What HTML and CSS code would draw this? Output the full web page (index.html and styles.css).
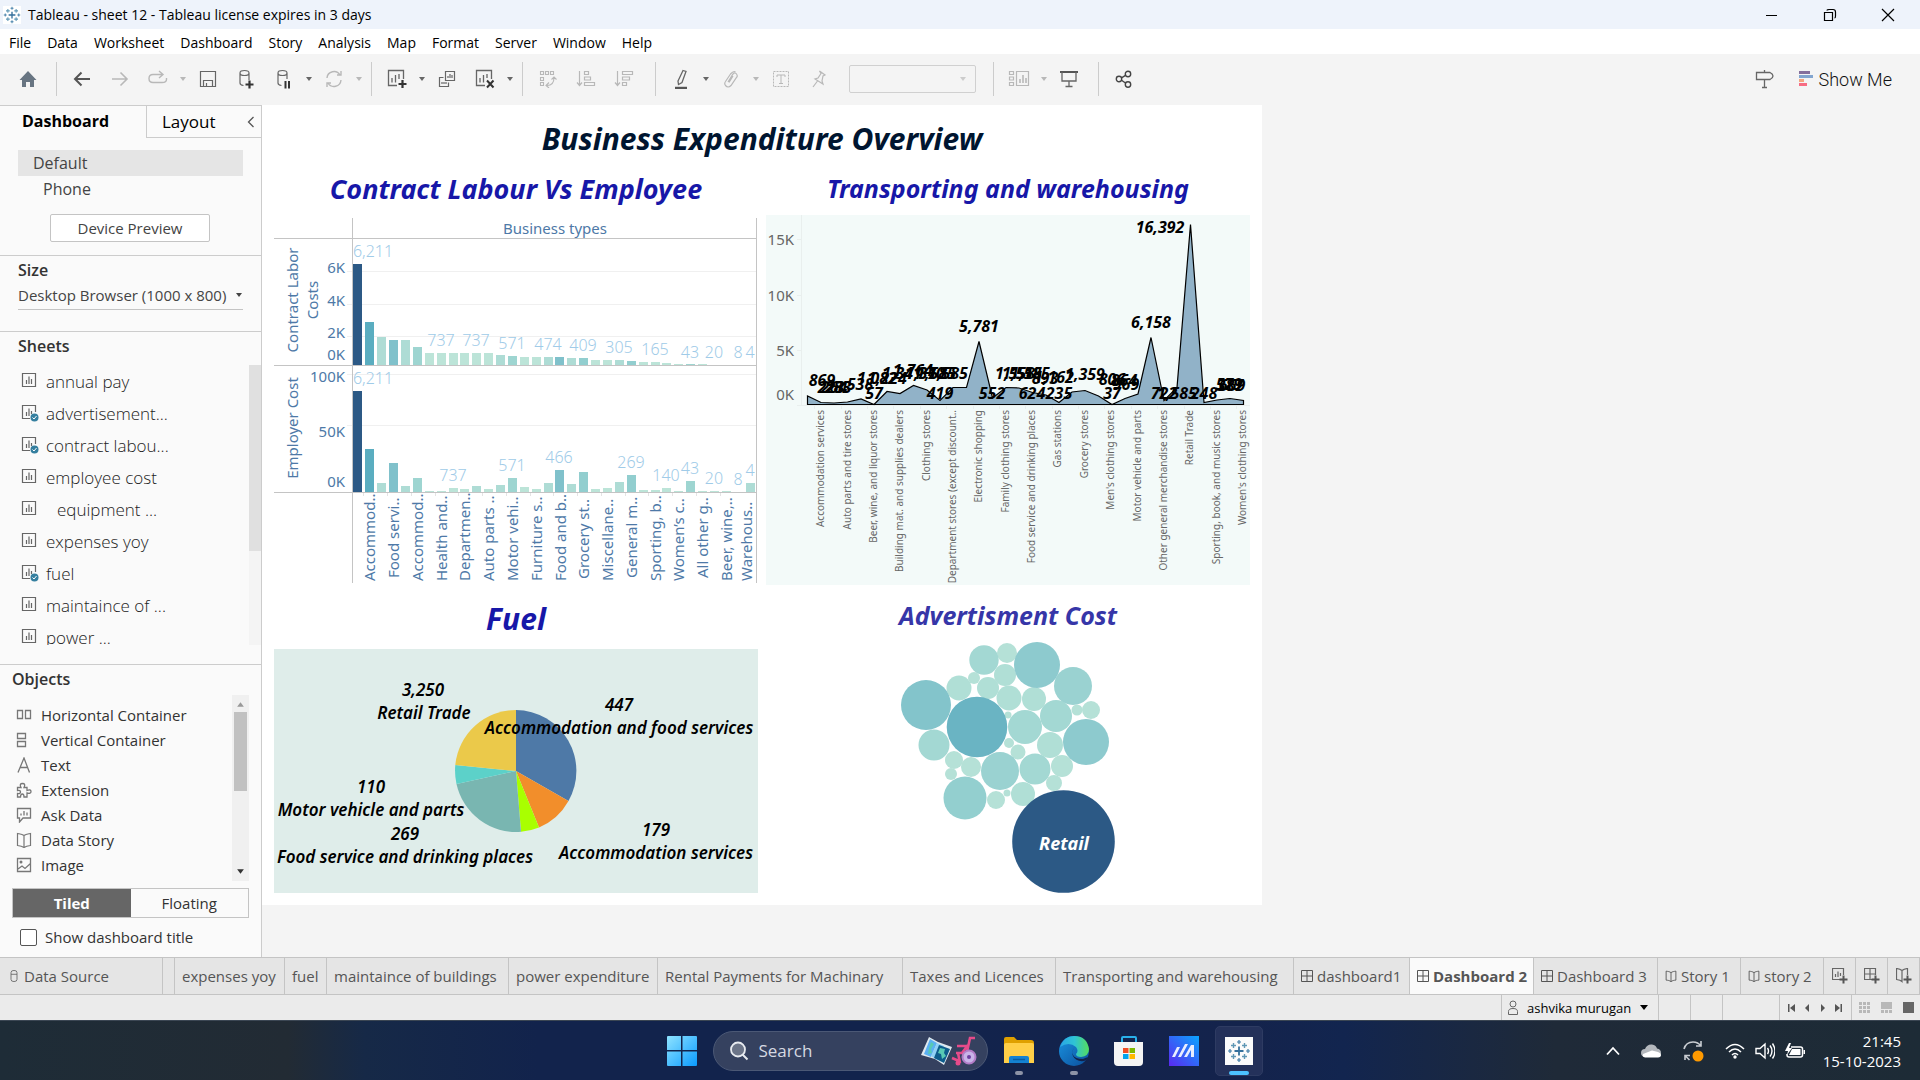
FILE: index.html
```html
<!DOCTYPE html>
<html lang="en">
<head>
<meta charset="utf-8">
<title>Tableau - sheet 12</title>
<link rel="stylesheet" href="styles.css">
</head>
<body>
<svg class="defs" aria-hidden="true">
  <symbol id="sheet" viewBox="0 0 16 16"><path d="M2 1.500h12.500v13H1.500v-13zM5.500 8v4M8 4.500V12M10.500 7v5" fill="none" stroke="currentColor" stroke-width="1.200"/></symbol>
  <symbol id="sheet-used" viewBox="0 0 18 18"><path d="M9 14.500H1.500v-13h13V8M5.500 8v4M8 4.500V12M10.500 7v3" fill="none" stroke="#666" stroke-width="1.200"/><circle cx="13.500" cy="13.500" r="4" fill="#357f9f"/><path d="M11.500 13.500l1.500 1.500 2.500-3" fill="none" stroke="#fff"/></symbol>
  <symbol id="caret" viewBox="0 0 8 6"><path d="M1 1h6L4 5z" fill="currentColor"/></symbol>
  <symbol id="grid" viewBox="0 0 12 12"><path d="M.5.5h11v11H.5zM6 .5v11M.5 6h11" fill="none" stroke="currentColor"/></symbol>
  <symbol id="book" viewBox="0 0 16 16"><path d="M8 3.500C6 2 4 2 1.500 1.500v12c2.500.2 4.500.5 6.500 2 2-1.500 4-1.800 6.500-2v-12C12 2 10 2 8 3.500zM8 3.500v12" fill="none" stroke="currentColor" stroke-width="1.200"/></symbol>
  <symbol id="logo" viewBox="0 0 24 24"><g fill="none" stroke="#35709c" stroke-width="1.800"><path d="M12 7.500v9M7.500 12h9"/><path stroke="#5f97b5" stroke-width="1.400" d="M6.500 4v5M4 6.500h5M17.500 4v5M15 6.500h5M6.500 15v5M4 17.500h5M17.500 15v5M15 17.500h5"/><path stroke="#3c7aa5" stroke-width="1.200" d="M12 1v4M10 3h4M12 19v4M10 21h4M3 10v4M1 12h4M21 10v4M19 12h4"/></g></symbol>
</svg>
<div class="app">
  <header class="titlebar">
    <svg class="app-icon"><use href="#logo"/></svg>
    <span class="app-title">Tableau - sheet 12 - Tableau license expires in 3 days</span>
    <button class="win" aria-label="Minimize"><svg width="14" height="14"><path d="M1 7.500h11" stroke="#000"/></svg></button>
    <button class="win" aria-label="Restore"><svg width="14" height="14"><path d="M1.500 4.500h8v8h-8zM4 2.500q0-1 2-1h4q2.500 0 2.500 2.500v4q0 2-1 2" fill="none" stroke="#000" stroke-width="1.200"/></svg></button>
    <button class="win" aria-label="Close"><svg width="14" height="14"><path d="M1 1l12 12M13 1L1 13" stroke="#000" stroke-width="1.200"/></svg></button>
  </header>
  <nav class="menubar">
    <button>File</button><button>Data</button><button>Worksheet</button><button>Dashboard</button><button>Story</button><button>Analysis</button><button>Map</button><button>Format</button><button>Server</button><button>Window</button><button>Help</button>
  </nav>
  <div class="toolbar">
    <div class="group home">
      <button class="tool" aria-label="Home"><svg width="18" height="18"><path d="M9 1l8.500 9H15v7h-4v-5H7v5H3v-7H.5z" fill="#687582"/></svg></button>
    </div>
    <div class="group">
      <button class="tool" aria-label="Back"><svg width="18" height="18"><path d="M17 9H2M8.500 2.500L2 9l6.500 6.500" fill="none" stroke="#555" stroke-width="2"/></svg></button>
      <button class="tool off" aria-label="Forward"><svg width="18" height="18"><path d="M1 9h15M9.500 2.500L16 9l-6.500 6.500" fill="none" stroke="currentColor" stroke-width="1.600"/></svg></button>
      <button class="tool off" aria-label="Redo"><svg width="20" height="18"><path d="M14 4.500H5q-4 0-4 4t4 4h9q4.500 0 4.500-3V8M11 1l4 3.500L11 8" fill="none" stroke="currentColor" stroke-width="1.400"/></svg></button>
      <button class="drop off" aria-label="Redo options"><svg><use href="#caret"/></svg></button>
      <button class="tool" aria-label="Save"><svg width="18" height="18"><path d="M1.500 1.500h15v15h-15zM4.500 16v-5.500h9V16M7.500 16v-3" fill="none" stroke="currentColor" stroke-width="1.200"/></svg></button>
      <button class="tool" aria-label="New data source"><svg width="18" height="20"><path d="M3 4q0-2.500 4.500-2.500T12 4v7M12 4q0 2.500-4.500 2.500T3 4v10q0 2 3.500 2.500" fill="none" stroke="currentColor" stroke-width="1.200"/><path d="M12.500 11.500v8M8.500 15.500h8" stroke="#333" stroke-width="2.200"/></svg></button>
      <button class="tool" aria-label="Pause updates"><svg width="18" height="20"><path d="M3 4q0-2.500 4.500-2.500T12 4v6M12 4q0 2.500-4.500 2.500T3 4v10q0 2 3.500 2.500" fill="none" stroke="currentColor" stroke-width="1.200"/><path d="M10.500 12v7.500M14 12v7.500" stroke="#333" stroke-width="2"/></svg></button>
      <button class="drop" aria-label="Pause options"><svg><use href="#caret"/></svg></button>
      <button class="tool off" aria-label="Refresh"><svg width="18" height="18"><path d="M2 8a7 7 0 0 1 13-3M16 10a7 7 0 0 1-13 3M12 5h4V1M6 13H2v4" fill="none" stroke="currentColor" stroke-width="1.400"/></svg></button>
      <button class="drop off" aria-label="Refresh options"><svg><use href="#caret"/></svg></button>
    </div>
    <div class="group">
      <button class="tool" aria-label="New worksheet"><svg width="20" height="20"><path d="M10 16.500H1.500v-15h15V10M5 9v4.500M8.500 6v7.500M12 5v5" fill="none" stroke="currentColor" stroke-width="1.300"/><path d="M15.500 11v8M11.500 15h8" stroke="#333" stroke-width="2.200"/></svg></button>
      <button class="drop" aria-label="Worksheet options"><svg><use href="#caret"/></svg></button>
      <button class="tool" aria-label="Duplicate"><svg width="18" height="18"><path d="M7.500 1.500h9v9h-9zM5.500 7.500h-4v9h9v-4M10 8V6M12 8V4M14 8V5M4 14v-2M6 14v-2M8 14v-2" fill="none" stroke="currentColor" stroke-width="1.200"/></svg></button>
      <button class="tool" aria-label="Clear sheet"><svg width="20" height="20"><path d="M10 16.500H1.500v-15h15V10M5 9v4.500M8.500 6v7.500M12 5v4" fill="none" stroke="currentColor" stroke-width="1.300"/><path d="M12 11.500l6.500 7M18.500 11.500l-6.500 7" stroke="#333" stroke-width="2"/></svg></button>
      <button class="drop" aria-label="Clear options"><svg><use href="#caret"/></svg></button>
    </div>
    <div class="group wide-end">
      <button class="tool off" aria-label="Swap rows and columns"><svg width="18" height="18"><path d="M1.500 1.500h3v3h-3zM6.500 1.500h3v3h-3zM11.500 1.500h3v3h-3zM1.500 7.500h3v3h-3zM1.500 12.500h3v3h-3zM8 15.500q7 0 7-8M12.500 9.500L15 7l2.500 2.500M10 12.500l-3 3 3 2.500" fill="none" stroke="currentColor" stroke-width="1.100"/></svg></button>
      <button class="tool off" aria-label="Sort ascending"><svg width="20" height="18"><path d="M3.500 1v14M1 12.500l2.500 3 2.500-3M8.500 1.500h4v3h-4zM8.500 7h6v3h-6zM8.500 12.500h10v3h-10z" fill="none" stroke="currentColor" stroke-width="1.200"/></svg></button>
      <button class="tool off" aria-label="Sort descending"><svg width="20" height="18"><path d="M3.500 1v14M1 12.500l2.500 3 2.500-3M8.500 1.500h10v3h-10zM8.500 7h7v3h-7zM8.500 12.500h4v3h-4z" fill="none" stroke="currentColor" stroke-width="1.200"/></svg></button>
    </div>
    <div class="group combo-group">
      <button class="tool" aria-label="Highlight"><svg width="16" height="20"><path d="M10 1.500l3 1-4 11-3.500 2-.5-3.500zM2 18.500h12" fill="none" stroke="currentColor" stroke-width="1.300"/><path d="M2 19h12" stroke="#555" stroke-width="2"/></svg></button>
      <button class="drop" aria-label="Highlight options"><svg><use href="#caret"/></svg></button>
      <button class="tool off" aria-label="Group"><svg width="16" height="18"><path d="M5 12l5-8q2-2 3.500 0t0 3.500l-5.500 8q-3 3-5.500 0-1.500-2 0-4l5-7.500q3-3.500 5-2M10 6l-4 6.500" fill="none" stroke="currentColor" stroke-width="1.200"/></svg></button>
      <button class="drop off" aria-label="Group options"><svg><use href="#caret"/></svg></button>
      <button class="tool off" aria-label="Show mark labels"><svg width="18" height="18"><path d="M1.500 1.500h15v15h-15z" fill="none" stroke="currentColor" stroke-dasharray="2 1"/><path d="M5 7V5h8v2M9 5v8.500M7 13.500h4" fill="none" stroke="currentColor"/></svg></button>
      <button class="tool off" aria-label="Pin"><svg width="16" height="18"><path d="M8.500 1l5.500 4-2 1-1 5 1 3-4-2.500L4 9l3-1 3-4.500zM6.500 11L2 17" fill="none" stroke="currentColor" stroke-width="1.200"/></svg></button>
      <button class="combo" aria-label="Fit"><svg><use href="#caret"/></svg></button>
    </div>
    <div class="group view-group">
      <button class="tool off" aria-label="Cards"><svg width="22" height="18"><path d="M1.500 1.500h4v3h-4zM1.500 7h4v3h-4zM1.500 12.500h4v3h-4zM8.500 1.500h12v14h-12z" fill="none" stroke="currentColor" stroke-width="1.200"/><path d="M12 13V9M15 13V5M18 13V8" stroke="currentColor" stroke-width="1.600"/></svg></button>
      <button class="drop off" aria-label="Card options"><svg><use href="#caret"/></svg></button>
      <button class="tool" aria-label="Presentation mode"><svg width="18" height="18"><path d="M0 2h18" stroke="#555" stroke-width="2"/><path d="M2 2v9h14V2M9 11v5.500M5.500 16.500h7" fill="none" stroke="currentColor" stroke-width="1.300"/></svg></button>
    </div>
    <div class="group last">
      <button class="tool" aria-label="Share"><svg width="18" height="18"><g fill="none" stroke="#444" stroke-width="1.400"><circle cx="4" cy="9" r="2.700"/><circle cx="13" cy="4" r="2.700"/><circle cx="13" cy="14.500" r="2.700"/><path d="M6.500 7.800l4-2.500M6.500 10.200l4 2.800"/></g></svg></button>
    </div>
    <div class="right-tools">
      <button class="tool" aria-label="Data guide"><svg width="20" height="20"><path d="M1.500 3.500h13.500q3 1.500 3 3.500t-3 3.500H1.500zM9.500 1v2.500M9.500 10.500v8M7 18.500h5" fill="none" stroke="#666" stroke-width="1.300"/></svg></button>
      <button class="showme"><svg width="15" height="16"><path d="M0 0h11v3H0z" fill="#856f9c"/><path d="M0 4h14v3H0z" fill="#83a5cf"/><path d="M0 8h5v3H0z" fill="#f3a680"/><path d="M0 12h8v3H0z" fill="#f76c83"/></svg>Show Me</button>
    </div>
  </div>

  <div class="workspace">
    <aside class="pane">
      <div class="pane-tabs">
        <button class="ptab active">Dashboard</button>
        <button class="ptab">Layout</button>
        <button class="collapse" aria-label="Collapse pane"><svg width="8" height="12"><path d="M6.500 1L1.500 6l5 5" fill="none" stroke="#555" stroke-width="1.300"/></svg></button>
      </div>
      <div class="devices">
        <button class="device selected">Default</button>
        <button class="device phone">Phone</button>
        <button class="preview">Device Preview</button>
      </div>
      <section class="size">
        <h2>Size</h2>
        <button class="size-pick">Desktop Browser (1000 x 800)<svg><use href="#caret"/></svg></button>
      </section>
      <section class="sheets">
        <h2>Sheets</h2>
        <div class="scroller">
          <ul>
            <li><svg class="used"><use href="#sheet" width="16" height="16"/></svg>annual pay</li>
            <li><svg class="used"><use href="#sheet-used"/></svg>advertisement...</li>
            <li><svg class="used"><use href="#sheet-used"/></svg>contract labou...</li>
            <li><svg class="used"><use href="#sheet" width="16" height="16"/></svg>employee cost</li>
            <li class="indent"><svg class="used"><use href="#sheet" width="16" height="16"/></svg>equipment ...</li>
            <li><svg class="used"><use href="#sheet" width="16" height="16"/></svg>expenses yoy</li>
            <li><svg class="used"><use href="#sheet-used"/></svg>fuel</li>
            <li><svg class="used"><use href="#sheet" width="16" height="16"/></svg>maintaince of ...</li>
            <li><svg class="used"><use href="#sheet" width="16" height="16"/></svg>power ...</li>
          </ul>
          <div class="track"><div class="thumb"></div></div>
        </div>
      </section>
      <section class="objects">
        <h2>Objects</h2>
        <div class="object-list">
          <ul>
            <li><svg><path d="M1.500 3.500h5v8h-5zM9.500 3.500h5v8h-5z" fill="none" stroke="#777" stroke-width="1.300"/></svg>Horizontal Container</li>
            <li><svg><path d="M1.500 1.500h8v5h-8zM1.500 9.500h8v5h-8z" fill="none" stroke="#777" stroke-width="1.300"/></svg>Vertical Container</li>
            <li><svg><path d="M2 15.500L8 1l5.500 14.500M4 10.500h7.500" fill="none" stroke="#777" stroke-width="1.300"/></svg>Text</li>
            <li><svg><path d="M1.500 5.500H5Q3 1.500 6.500 1.500T8 5.500h3v3q4-1.500 4 1t-4 1.500v4H8q0-3-1.700-3t-1.800 3h-3v-3.500q3 .5 3-1.500t-3-1.500z" fill="none" stroke="#777" stroke-width="1.300"/></svg>Extension</li>
            <li><svg><path d="M1.500 1.500h13v9.500H7L3.500 15v-4h-2zM5 8.500v-2M8 8.500V4M11 8.500v-3" fill="none" stroke="#777" stroke-width="1.300"/></svg>Ask Data</li>
            <li><svg class="grey"><use href="#book"/></svg>Data Story</li>
            <li><svg><path d="M1.500 1.500h13v13h-13zM2 12l4-3 3 2.500 5.500-5" fill="none" stroke="#777" stroke-width="1.300"/><circle cx="5" cy="5" r="1.500" fill="#777"/></svg>Image</li>
          </ul>
          <div class="bar-track"><svg class="up"><use href="#caret"/></svg><div class="bar-thumb"></div><svg class="down"><use href="#caret"/></svg></div>
        </div>
        <div class="toggle"><button class="on">Tiled</button><button>Floating</button></div>
        <label class="show-title"><input type="checkbox">Show dashboard title</label>
      </section>
    </aside>

    <main class="stage">
      <div class="dashboard">
        <h1>Business Expenditure Overview</h1>
        <section class="viz contract">
          <h2>Contract Labour Vs Employee</h2>
          <svg class="labour" viewBox="4 -1 484 376">
            <path d="M77 61.500h409M77 94.500h409M77 126.500h409M77 164.500h409M77 215.500h409" stroke="#f0f0f0"/>
            <path d="M93.500 283v3M117.500 283v3M141.500 283v3M165.500 283v3M188.500 283v3M212.500 283v3M236.500 283v3M260.500 283v3M283.500 283v3M307.500 283v3M331.500 283v3M355.500 283v3M378.500 283v3M402.500 283v3M426.500 283v3M450.500 283v3" stroke="#e4e4e4"/>
            <g fill="#bce4d8"><path d="M155 143h9v12h-9zM167 143h9v12h-9zM179 143h9v12h-9zM190 143h9v12h-9zM202 143h9v12h-9zM214 143h9v12h-9zM250 147h9v8h-9zM262 147h9v8h-9zM321 150h9v5h-9zM333 150h9v5h-9zM369 152h9v3h-9zM381 152h9v3h-9zM392 153h9v2h-9zM404 154h9v1h-9zM428 154h9v1h-9z"/><path d="M155 281h9v1h-9zM167 281h9v1h-9zM179 278h9v4h-9zM190 279h9v3h-9zM214 279h9v3h-9zM250 277h9v5h-9zM262 279h9v3h-9zM321 279h9v3h-9zM333 278h9v4h-9zM369 280h9v2h-9zM381 280h9v2h-9zM392 278h9v4h-9zM404 281h9v1h-9zM428 281h9v1h-9zM440 281h9v1h-9zM452 281h9v1h-9z"/></g>
            <path d="M107 127h9v28h-9zM131 130h9v25h-9zM226 145h9v10h-9zM274 147h9v8h-9zM297 148h9v7h-9zM345 150h9v5h-9zM107 273h9v9h-9zM131 276h9v6h-9zM202 276h9v6h-9zM226 275h9v7h-9zM274 273h9v9h-9zM297 274h9v8h-9zM345 272h9v10h-9zM476 273h9v9h-9z" fill="#aedcd5"/>
            <path d="M143 137h9v18h-9zM238 146h9v9h-9zM416 154h9v1h-9zM143 268h9v14h-9zM238 268h9v14h-9zM416 271h9v11h-9z" fill="#9ed5d1"/>
            <path d="M309 148h9v7h-9zM357 151h9v4h-9zM309 262h9v20h-9zM357 265h9v17h-9z" fill="#92cecf"/>
            <path d="M119 130h9v25h-9zM285 147h9v8h-9zM119 253h9v29h-9zM285 260h9v22h-9z" fill="#80c1cb"/>
            <path d="M95 112h9v43h-9zM95 239h9v43h-9z" fill="#5aadc0"/>
            <path d="M83 54h9v101h-9zM83 181h9v101h-9z" fill="#2c5985"/>
            <path d="M82.500 8v365M486.500 8v365M4 28.500h482M4 155.500h482M4 282.500h482" stroke="#c4c4c4"/>
            <text class="head" x="285" y="24">Business types</text>
            <g class="axis-name"><text transform="translate(28 90) rotate(-90)">Contract Labor</text><text transform="translate(48 90) rotate(-90)">Costs</text><text transform="translate(28 218) rotate(-90)">Employer Cost</text></g>
            <g class="tick"><text x="75" y="63">6K</text><text x="75" y="96">4K</text><text x="75" y="128">2K</text><text x="75" y="150">0K</text><text x="75" y="172">100K</text><text x="75" y="227">50K</text><text x="75" y="277">0K</text></g>
            <g class="mark"><text x="103" y="47">6,211</text><text x="171" y="136">737</text><text x="206" y="136">737</text><text x="242" y="139">571</text><text x="278" y="140">474</text><text x="313" y="141">409</text><text x="349" y="143">305</text><text x="385" y="145">165</text><text x="420" y="148">43</text><text x="444" y="148">20</text><text x="468" y="148">8</text><text x="480" y="148">4</text>
            <text x="103" y="174">6,211</text><text x="183" y="271">737</text><text x="242" y="261">571</text><text x="289" y="253">466</text><text x="361" y="258">269</text><text x="396" y="271">140</text><text x="420" y="264">43</text><text x="444" y="274">20</text><text x="468" y="275">8</text><text x="480" y="266">4</text></g>
            <g class="cat"><text transform="translate(105 371) rotate(-90)">Accommod..</text><text transform="translate(129 368) rotate(-90)">Food servi..</text><text transform="translate(153 371) rotate(-90)">Accommod..</text><text transform="translate(177 371) rotate(-90)">Health and..</text><text transform="translate(200 371) rotate(-90)">Departmen..</text><text transform="translate(224 371) rotate(-90)">Auto parts ..</text><text transform="translate(248 371) rotate(-90)">Motor vehi..</text><text transform="translate(272 371) rotate(-90)">Furniture s..</text><text transform="translate(296 371) rotate(-90)">Food and b..</text><text transform="translate(319 369) rotate(-90)">Grocery st..</text><text transform="translate(343 371) rotate(-90)">Miscellane..</text><text transform="translate(367 368) rotate(-90)">General m..</text><text transform="translate(391 371) rotate(-90)">Sporting, b..</text><text transform="translate(414 371) rotate(-90)">Women’s c..</text><text transform="translate(438 368) rotate(-90)">All other g..</text><text transform="translate(462 371) rotate(-90)">Beer, wine,..</text><text transform="translate(482 371) rotate(-90)">Warehous..</text></g>
          </svg>
        </section>
        <section class="viz">
          <h2>Transporting and warehousing</h2>
          <svg class="transport" viewBox="6 -1 484 376">
            <path d="M6 5h484v370H6z" fill="#f3faf9"/>
            <path d="M41.500 5v190M37 29.500h4M37 85.500h4M37 140.500h4M37 195.500h453M54.500 196v3M81.500 196v3M107.500 196v3M133.500 196v3M160.500 196v3M186.500 196v3M213.500 196v3M239.500 196v3M265.500 196v3M292.500 196v3M318.500 196v3M344.500 196v3M371.500 196v3M397.500 196v3M424.500 196v3M450.500 196v3M476.500 196v3" stroke="#e9efee"/>
            <path d="M47.500 194.500V186L61 192.500 74 193 87.500 192 101 189 114 194.500 127 181.500 140 183.500 153.500 175.500 167 180 180 190.500 193 177.500h13.500L219 131.500 232.500 188 246 177.500 259 178 272.500 182.500 286 185 299 192.500 312 182 325 180.500 338.500 186 352 194.500 365 188.500 378 184 391 127.500 404 190.500 417 177.500 430.500 14.500 444 192.500 457 190 470 188.500 483.500 190.500v4z" fill="#91b2c8" stroke="#000" stroke-width="1.200"/>
            <g class="tick plain"><text x="34" y="35">15K</text><text x="34" y="91">10K</text><text x="34" y="146">5K</text><text x="34" y="190">0K</text></g>
            <g class="peak"><text x="62" y="176">869</text><text x="71" y="183">223</text><text x="74" y="183">264</text><text x="78" y="183">283</text><text x="100" y="180">538</text><text x="114" y="189">57</text><text x="117" y="174">1,082</text><text x="127" y="174">1,224</text><text x="153" y="166">1,764</text><text x="142" y="169">1,341</text><text x="165" y="169">1,370</text><text x="180" y="189">419</text><text x="176" y="169">1,585</text><text x="188" y="169">1,585</text><text x="219" y="122">5,781</text><text x="232" y="189">552</text><text x="255" y="169">1,558</text><text x="262" y="169">1,515</text><text x="270" y="169">1,585</text><text x="272" y="189">624</text><text x="285" y="174">893</text><text x="294" y="173">1,162</text><text x="299" y="189">235</text><text x="325" y="170">1,359</text><text x="352" y="175">806</text><text x="352" y="189">37</text><text x="364" y="176">864</text><text x="366" y="180">969</text><text x="391" y="118">6,158</text><text x="404" y="189">722</text><text x="417" y="189">1,585</text><text x="400" y="23">16,392</text><text x="444" y="189">248</text><text x="469" y="180">579</text><text x="470" y="181">387</text><text x="472" y="181">669</text></g>
            <g class="cat small"><text transform="translate(64 200) rotate(-90)">Accommodation services</text><text transform="translate(91 200) rotate(-90)">Auto parts and tire stores</text><text transform="translate(117 200) rotate(-90)">Beer, wine, and liquor stores</text><text transform="translate(143 200) rotate(-90)">Building mat. and supplies dealers</text><text transform="translate(170 200) rotate(-90)">Clothing stores</text><text transform="translate(196 200) rotate(-90)">Department stores (except discount..</text><text transform="translate(222 200) rotate(-90)">Electronic shopping</text><text transform="translate(249 200) rotate(-90)">Family clothing stores</text><text transform="translate(275 200) rotate(-90)">Food service and drinking places</text><text transform="translate(301 200) rotate(-90)">Gas stations</text><text transform="translate(328 200) rotate(-90)">Grocery stores</text><text transform="translate(354 200) rotate(-90)">Men's clothing stores</text><text transform="translate(381 200) rotate(-90)">Motor vehicle and parts</text><text transform="translate(407 200) rotate(-90)">Other general merchandise stores</text><text transform="translate(433 200) rotate(-90)">Retail Trade</text><text transform="translate(460 200) rotate(-90)">Sporting, book, and  music stores</text><text transform="translate(486 200) rotate(-90)">Women's clothing stores</text></g>
          </svg>
        </section>
        <section class="viz fuel">
          <h2>Fuel</h2>
          <svg viewBox="4 59 484 244">
            <path d="M4 59h484v244H4z" fill="#dfedea"/>
            <path d="M246 181V120a61 61 0 0 1 52.500 91z" fill="#4e79a7"/>
            <path d="M246 181l52.500 30a61 61 0 0 1-29.500 26.500z" fill="#f28e2b"/>
            <path d="M246 181l23 56.500a61 61 0 0 1-18 4.300z" fill="#a9ff00"/>
            <path d="M246 181l5 60.800A61 61 0 0 1 186.500 194z" fill="#79b6b1"/>
            <path d="M246 181l-59.500 13a61 61 0 0 1-1.200-19z" fill="#5cd1c9"/>
            <path d="M246 181l-60.700-6A61 61 0 0 1 246 120z" fill="#ebc94a"/>
            <g class="slice"><text x="153" y="106">3,250</text><text x="154" y="129">Retail Trade</text><text x="349" y="121">447</text><text x="349" y="144">Accommodation and food services</text><text x="101" y="203">110</text><text x="101" y="226">Motor vehicle and parts</text><text x="135" y="250">269</text><text x="135" y="273">Food service and drinking places</text><text x="386" y="246">179</text><text x="386" y="269">Accommodation services</text></g>
          </svg>
        </section>
        <section class="viz advert">
          <h2>Advertisment Cost</h2>
          <svg viewBox="-94 59 484 244">
            <g fill="#b5e1d7"><circle cx="147" cy="63" r="10"/><circle cx="114" cy="88" r="6"/><circle cx="148" cy="125" r="3.500"/><circle cx="217" cy="120" r="5.500"/><circle cx="231" cy="120" r="9"/><circle cx="149" cy="153" r="5"/><circle cx="158" cy="162" r="7.500"/><circle cx="94" cy="170" r="9"/><circle cx="111" cy="177" r="10"/><circle cx="91" cy="184" r="6"/><circle cx="136" cy="210" r="9"/><circle cx="147" cy="203" r="3.500"/><circle cx="194" cy="193" r="8"/><circle cx="202" cy="176" r="11"/></g>
            <g fill="#b0dfd6"><circle cx="145" cy="85" r="11"/><circle cx="128" cy="98" r="11"/><circle cx="99" cy="98" r="12.500"/><circle cx="149" cy="108" r="12.500"/><circle cx="174" cy="109" r="12"/><circle cx="190" cy="155" r="13"/><circle cx="163" cy="204" r="12"/></g>
            <g fill="#a3d8d3"><circle cx="124" cy="70" r="14.700"/><circle cx="165" cy="137" r="17"/><circle cx="196" cy="126" r="16"/><circle cx="74" cy="155" r="15.500"/><circle cx="175" cy="179" r="15.500"/></g>
            <g fill="#9ad2d1"><circle cx="213" cy="96" r="19"/><circle cx="140" cy="181" r="19"/></g>
            <circle cx="105" cy="208" r="21.500" fill="#93cfcf"/>
            <g fill="#8dcace"><circle cx="177" cy="75" r="23"/><circle cx="226" cy="152" r="23"/></g>
            <circle cx="66" cy="115" r="25" fill="#83c4cb"/>
            <circle cx="117" cy="137" r="30.300" fill="#6ab4c3"/>
            <circle cx="203.500" cy="251.500" r="51.300" fill="#2c5985"/>
            <text class="retail" x="204" y="260">Retail</text>
          </svg>
        </section>
      </div>
    </main>
  </div>

  <nav class="sheet-tabs">
    <button class="source"><svg class="db" viewBox="0 0 8 14"><path d="M.5 3q0-2.500 3.500-2.500T7.500 3v8q0 2.500-3.500 2.500T.5 11zM.5 5h7" fill="none" stroke="#666"/></svg>Data Source</button>
    <span></span>
    <button>expenses yoy</button>
    <button>fuel</button>
    <button>maintaince of buildings</button>
    <button>power expenditure</button>
    <button>Rental Payments for Machinary</button>
    <button>Taxes and Licences</button>
    <button>Transporting and warehousing</button>
    <button><svg><use href="#grid"/></svg>dashboard1</button>
    <button class="current"><svg><use href="#grid"/></svg>Dashboard 2</button>
    <button><svg><use href="#grid"/></svg>Dashboard 3</button>
    <button><svg><use href="#book"/></svg>Story 1</button>
    <button><svg><use href="#book"/></svg>story 2</button>
    <button class="add" aria-label="New worksheet"><svg viewBox="0 0 16 16"><path d="M8 11.500H.5V.5h11V7M3.500 9V6M6 9V3.500M8.500 8V5" fill="none" stroke="#666" stroke-width="1.200"/><path d="M11.500 7.500v8M7.500 11.500h8" stroke="#555" stroke-width="2"/></svg></button>
    <button class="add" aria-label="New dashboard"><svg viewBox="0 0 16 16"><path d="M8 11.500H.5V.5h11V7M6 .5v11M.5 6h11" fill="none" stroke="#666" stroke-width="1.200"/><path d="M11.500 7.500v8M7.500 11.500h8" stroke="#555" stroke-width="2"/></svg></button>
    <button class="add" aria-label="New story"><svg viewBox="0 0 16 16"><path d="M6 2.500Q4 1 .5.500v11q4 .5 5.500 2v-11Q8 1 11.500.5V7" fill="none" stroke="#666" stroke-width="1.200"/><path d="M11.500 7.500v8M7.500 11.500h8" stroke="#555" stroke-width="2"/></svg></button>
  </nav>

  <footer class="status">
    <button class="user"><svg width="12" height="16"><circle cx="6" cy="4" r="3" fill="none" stroke="#666"/><path d="M1.500 14.500v-3q0-3 4.500-3t4.500 3v3z" fill="none" stroke="#666"/></svg>ashvika murugan<svg class="user-caret" width="10" height="6"><path d="M1 0h8L5 5z"/></svg></button>
    <span></span><span></span><span class="wide"></span>
    <div class="nav">
      <button aria-label="First"><svg width="8" height="8"><path d="M1 0h1.500v8H1zM8 0v8L3 4z"/></svg></button>
      <button aria-label="Previous"><svg width="8" height="8"><path d="M6 0v8L2 4z"/></svg></button>
      <button aria-label="Next"><svg width="8" height="8"><path d="M2 0v8l4-4z"/></svg></button>
      <button aria-label="Last"><svg width="8" height="8"><path d="M5.500 0H7v8H5.500zM0 0v8l5-4z"/></svg></button>
    </div>
    <div class="views">
      <button aria-label="Sheet sorter"><svg width="11" height="11"><path d="M0 0h3v3H0zM4 0h3v3H4zM8 0h3v3H8zM0 4h3v3H0zM4 4h3v3H4zM8 4h3v3H8zM0 8h3v3H0zM4 8h3v3H4zM8 8h3v3H8z" fill="#b8b8b8"/></svg></button>
      <button aria-label="Filmstrip"><svg width="11" height="11"><path d="M0 0h11v7H0zM0 8h3v3H0zM4 8h3v3H4zM8 8h3v3H8z" fill="#b8b8b8"/></svg></button>
      <button aria-label="Tabs"><svg width="11" height="11"><path d="M0 0h11v11H0z" fill="#666"/></svg></button>
    </div>
  </footer>

  <div class="taskbar">
    <div class="apps">
      <button aria-label="Start"><svg width="30" height="30"><defs><linearGradient id="w" x2="1" y2="1"><stop stop-color="#8fe3ff"/><stop offset="1" stop-color="#0a9bff"/></linearGradient></defs><path d="M0 1q0-1 1-1h13v14H0zM15.500 0H29q1 0 1 1v13H15.500zM0 15.500h14V30H1q-1 0-1-1zM15.500 15.500H30V29q0 1-1 1H15.500z" fill="url(#w)"/></svg></button>
      <label class="search"><svg width="20" height="20"><circle cx="9" cy="8.500" r="7" fill="#6b7488" stroke="#e8ebf0" stroke-width="1.800"/><path d="M13.500 13.500l5 5" stroke="#e8ebf0" stroke-width="2"/></svg><input type="text" placeholder="Search" aria-label="Search"><svg width="56" height="30"><path d="M8 1l9 5 14 5-8 18-9-6L0 19z" fill="#dfe8ee"/><path d="M9 3l7 4-6 14-7-3z" fill="#5ab0f2"/><path d="M16 7l7 3-7 14-6-4z" fill="#8fd0f5"/><path d="M18 9l11 4-6 14-10-5z" fill="#0d5c8c"/><path d="M10 6l3 2-3 5 1 4-4 1 1-6zM19 12l5 1-1 4 2 3-4 3-1-5-3-1z" fill="#58c9b4"/><path d="M54 2h-5l-3 14M36 10h12M35 17h12M37 17l2 10M47 9l-6 8M31 22l7 3" stroke="#e64b8a" stroke-width="2.600" fill="none"/><circle cx="48" cy="21" r="6.500" fill="#c9b4e8" stroke="#b27cc6" stroke-width="2"/><circle cx="48" cy="21" r="2" fill="#6d3fa0"/><circle cx="37" cy="27" r="2.500" fill="#e64b8a"/></svg></label>
      <button class="run" aria-label="File Explorer"><svg width="30" height="30"><path d="M0 3q0-2 2-2h8l3 3h14q3 0 3 3v4H0z" fill="#dfa000"/><path d="M0 9q0-2 2-2h26q2 0 2 2v18H0z" fill="#ffcf48"/><path d="M5 27v-5q0-2 2-2h16q2 0 2 2v5z" fill="#1482d2"/><path d="M9 23.500h12" stroke="#0a5ca0" stroke-width="1.500"/></svg></button>
      <button class="run" aria-label="Edge"><svg width="30" height="30"><defs><linearGradient id="e1" x2="1"><stop stop-color="#2aa6e6"/><stop offset=".5" stop-color="#2fc3d4"/><stop offset="1" stop-color="#55dd5c"/></linearGradient><linearGradient id="e2" x2="1" y2="1"><stop stop-color="#1a93e0"/><stop offset="1" stop-color="#0b4f9c"/></linearGradient></defs><circle cx="15" cy="15" r="15" fill="url(#e2)"/><path d="M1 11Q5 0 15 0q13 0 15 13 0 7-8 8-5 0-5-3 3-3 0-7Q10 5 1 11z" fill="url(#e1)"/><path d="M16 11q-4 4-2 8t10 4l5-2q-1 3-4 4-8 1-11-5-2-5 2-9z" fill="#13224a"/></svg></button>
      <button aria-label="Microsoft Store"><svg width="30" height="30"><path d="M8 6V2q0-1 1-1h12q1 0 1 1v4" fill="none" stroke="#29b0ea" stroke-width="2"/><path d="M0 6h29v20q0 4-4 4H4q-4 0-4-4z" fill="#f4f4f4"/><path d="M9 12h5.500v5H9z" fill="#f04e24"/><path d="M15.500 12H21v5h-5.500z" fill="#7fb900"/><path d="M9 18h5.500v5H9z" fill="#02a3ee"/><path d="M15.500 18H21v5h-5.500z" fill="#feb800"/></svg></button>
      <button aria-label="MyAsus"><svg width="30" height="30"><defs><linearGradient id="m" x1="1" x2="0" y2="1"><stop stop-color="#0aa5ff"/><stop offset="1" stop-color="#5a28f0"/></linearGradient></defs><path d="M0 0h30v30H0z" fill="url(#m)"/><path d="M3 21l5-10h3L6 21zM9 21l7-13h3l-7 13zM15 21l7-12h3v12h-3v-7l-4 7z" fill="#e9eeff"/></svg></button>
      <button class="focused" aria-label="Tableau"><svg width="28" height="28" viewBox="-2 -2 28 28"><path d="M-2-2h28v28H-2z" fill="#fbfbfb"/><use href="#logo" width="24" height="24"/></svg></button>
    </div>
    <div class="tray">
      <svg width="14" height="10"><path d="M1 8.500l6-6.500 6 6.500" fill="none" stroke="#fff" stroke-width="1.800"/></svg>
      <svg width="20" height="14"><path d="M5 13Q0 13 0 9t4-4q2-5 7-4.500 4 .5 5 4 4 .5 4 4.500t-4 4z" fill="#b4b8bd"/><path d="M4 13.500Q1 13 2 10l9-3.500 6 1.500q3 1 3 3t-3 2.500z" fill="#fff"/></svg>
      <svg width="22" height="22"><path d="M2 9Q4 2 11 2q5 0 8 4M19 1v5h-5M3 20v-4.500h5M3.500 16l4 4" fill="none" stroke="#c9cdd2" stroke-width="1.600"/><circle cx="16" cy="16" r="5.500" fill="#ff9a00"/></svg>
      <svg width="20" height="16"><path d="M1 6Q10-3 19 6M4 9q6-6 12 0M7 12q3-3 6 0" fill="none" stroke="#fff" stroke-width="1.500"/><circle cx="10" cy="14" r="1.700" fill="#fff"/></svg>
      <svg width="20" height="18"><path d="M1 6.500h4l5-4.500v14l-5-4.500H1zM12.500 6q2 3 0 6M15 3.500q4 5.500 0 11M17.500 1.500q5 7.500 0 15" fill="none" stroke="#fff" stroke-width="1.400"/></svg>
      <svg width="20" height="18"><path d="M6 5h9.500q2 0 2 2v6q0 2-2 2H4q-2 0-2-2v-1" fill="none" stroke="#fff" stroke-width="1.500"/><path d="M7 7h8.500v6H4zM18.500 8v4h1.500V8zM4 1L0 9h3l-1 4 5-7H4l2-5z" fill="#fff"/></svg>
      <div class="clock"><time>21:45</time><time>15-10-2023</time></div>
    </div>
  </div>
</div>
</body>
</html>
```
FILE: styles.css
```css
* { box-sizing: border-box; }
body { margin: 0; font-family: "Open Sans", "Noto Sans", sans-serif; color: #333; }
button { margin: 0; padding: 0; border: 0; background: none; font: inherit; color: inherit; }
h1, h2, ul { margin: 0; padding: 0; font-weight: 400; list-style: none; }
svg { flex: none; }
.defs { position: absolute; width: 0; height: 0; }

.app { display: flex; flex-direction: column; height: 100vh; overflow: hidden; background: #f4f4f4; }

/* window chrome */
.titlebar { display: flex; align-items: center; height: 29px; padding: 0 3px; background: #eef3fb; font-size: 14px; color: #000; }
.app-icon { width: 18px; height: 18px; background: #fff; }
.app-title { flex: 1; padding-left: 7px; }
.win { display: flex; justify-content: center; width: 58px; }
.menubar { display: flex; align-items: center; gap: 16px; height: 25px; padding: 2px 0 0 9px; background: #fff; font-size: 14px; color: #000; }

/* toolbar */
.toolbar { display: flex; align-items: center; height: 51px; padding-bottom: 1px; background: #f4f4f4; color: #666; }
.group { display: flex; align-items: center; height: 34px; padding: 0 6px; border-right: 1px solid #ccc; }
.group.home { padding: 0 9px; }
.group.wide-end { padding-right: 12px; }
.group.combo-group { padding-right: 17px; }
.group.view-group { padding-right: 10px; }
.group.last { border-right: 0; }
.tool { display: flex; align-items: center; justify-content: center; width: 38px; height: 34px; }
.drop { display: flex; justify-content: center; width: 12px; }
.drop svg { width: 8px; height: 6px; }
.off { color: #b8b8b8; }
.combo { display: flex; align-items: center; justify-content: flex-end; width: 127px; height: 28px; margin-left: 11px; padding-right: 8px; border: 1px solid #d0d0d0; border-radius: 2px; color: #ccc; }
.combo svg { width: 8px; height: 6px; }
.right-tools { display: flex; align-items: center; gap: 15px; margin-left: auto; padding-right: 28px; }
.showme { display: flex; align-items: center; gap: 5px; font-family: Roboto, sans-serif; font-size: 18px; font-weight: 300; color: #111; }

/* left pane */
.workspace { display: flex; flex: 1; min-height: 0; }
.pane { display: flex; flex-direction: column; width: 262px; background: #fafafa; border: 1px solid #ccc; border-width: 1px 1px 0 0; font-size: 15px; }
.pane h2 { font-size: 16px; font-weight: 600; line-height: 22px; }
.pane-tabs { display: flex; height: 32px; color: #000; font-size: 17px; }
.ptab { flex: 1; padding: 0 0 0 15px; border: 1px solid #ccc; border-width: 0 0 1px 1px; text-align: left; }
.ptab.active { flex: none; width: 146px; padding: 0 0 2px 22px; border: 0; font-size: 16px; font-weight: 700; }
.collapse { width: 20px; border-bottom: 1px solid #ccc; }
.devices { display: flex; flex-direction: column; height: 118px; padding: 12px 18px 0; border-bottom: 1px solid #ccc; font-size: 16px; color: #444; }
.device { height: 26px; padding-left: 15px; text-align: left; }
.device.selected { background: #e5e5e5; }
.device.phone { padding-left: 25px; }
.preview { width: 160px; height: 28px; margin: 12px 0 0 32px; border: 1px solid #c4c4c4; border-radius: 2px; background: #fff; font-size: 15px; }
.size { height: 76px; padding: 3px 18px 0; border-bottom: 1px solid #ccc; }
.size-pick { display: flex; align-items: center; justify-content: space-between; width: 225px; height: 29px; border-bottom: 1px solid #c4c4c4; font-size: 15px; white-space: nowrap; color: #444; }
.size-pick svg { width: 8px; height: 6px; }
.sheets { display: flex; flex: 1; flex-direction: column; min-height: 0; padding-bottom: 19px; }
.sheets h2 { padding: 3px 18px 8px; }
.scroller { display: flex; flex: 1; min-height: 0; overflow: hidden; }
.scroller ul { flex: 1; font-size: 17px; font-weight: 300; }
.scroller li { display: flex; align-items: center; height: 32px; padding-left: 21px; gap: 7px; color: #222; }
.scroller li.indent { gap: 18px; }
.used { width: 18px; height: 18px; color: #666; }
.track { width: 12px; background: #f4f4f4; }
.thumb { height: 186px; background: #e0e0e0; }
.objects { height: 293px; padding: 3px 12px 0; border-top: 1px solid #ccc; }
.object-list { display: flex; justify-content: space-between; height: 186px; margin-top: 5px; }
.object-list ul { padding-top: 7px; }
.object-list li { display: flex; align-items: center; gap: 9px; height: 25px; padding-left: 4px; }
.object-list li svg { width: 16px; height: 16px; }
.grey { color: #777; }
.bar-track { display: flex; flex-direction: column; align-items: center; width: 17px; padding: 6px 0; background: #f0f0f0; }
.bar-track svg { width: 9px; height: 7px; }
.bar-track .up { transform: rotate(180deg); color: #999; }
.bar-track .down { margin-top: auto; color: #333; }
.bar-thumb { width: 13px; height: 79px; margin-top: 4px; background: #c1c1c1; }
.toggle { display: grid; grid-template-columns: 1fr 1fr; height: 30px; margin-top: 7px; border: 1px solid #c4c4c4; }
.toggle .on { background: #666; color: #fff; font-weight: 700; }
.show-title { display: flex; align-items: center; gap: 8px; height: 38px; padding-left: 8px; }
.show-title input { appearance: none; width: 17px; height: 17px; margin: 0; border: 1px solid #555; border-radius: 2px; background: #fff; }

/* dashboard */
.stage { flex: 1; overflow: hidden; }
.dashboard { display: grid; grid-template: 66px 414px 308px / 1fr 1fr; column-gap: 8px; width: 100%; max-width: 1000px; padding: 0 12px 12px; background: #fff; font-family: "Noto Sans", sans-serif; }
.dashboard h1, .dashboard h2 { font-style: italic; font-weight: 700; text-align: center; }
.dashboard h1 { grid-column: 1 / -1; padding-top: 4px; font-size: 30px; line-height: 60px; color: #001530; }
.viz h2 { height: 38px; font-size: 25px; line-height: 34px; color: #1717a8; }
.contract h2 { font-size: 27px; line-height: 36px; }
.viz svg { display: block; width: 100%; overflow: visible; }
.fuel h2 { height: 64px; font-size: 30px; line-height: 68px; }
.advert h2 { height: 64px; line-height: 60px; color: #3636a8; }
.viz text { font-size: 16px; }
.viz .head, .axis-name text, .cat text, .tick text { font-size: 15px; fill: #4e79a7; }
.head, .axis-name, .mark, .peak, .slice, .retail { text-anchor: middle; }
.tick { text-anchor: end; }
.tick.plain text { fill: #666; }
.mark text { fill: #a0cbe8; font-weight: 300; }
.peak text, .slice text { font-weight: 700; font-style: italic; fill: #000; }
.slice text { font-size: 17px; font-weight: 600; }
.cat.small { text-anchor: end; }
.cat.small text { font-size: 10px; font-weight: 400; fill: #666; }
.viz .retail { font-size: 18px; font-weight: 700; font-style: italic; fill: #fff; }

/* sheet tabs and status bar */
.sheet-tabs { display: grid; grid-template-columns: 163px 12px 110px 42px 182px 149px 245px 153px 238px 116px 124px 124px 83px 83px 32px 32px 1fr; height: 38px; border: 1px solid #c4c4c4; border-width: 1px 0; background: #e5e5e5; font-size: 15px; color: #555; white-space: nowrap; }
.sheet-tabs > * { display: flex; align-items: center; gap: 4px; padding-left: 7px; border-right: 1px solid #c4c4c4; }
.sheet-tabs .source { gap: 6px; }
.sheet-tabs svg { width: 12px; height: 12px; }
.sheet-tabs .db { width: 8px; height: 12px; margin-left: 3px; }
.sheet-tabs .current { background: #fafafa; font-weight: 700; }
.sheet-tabs .add { justify-content: center; padding: 0; }
.sheet-tabs .add svg { width: 16px; height: 16px; }
.status { display: flex; justify-content: flex-end; height: 25px; background: #ebebeb; font-size: 13px; color: #000; white-space: nowrap; }
.status > * { display: flex; align-items: center; width: 32px; border-left: 1px solid #c4c4c4; }
.status .user { width: 157px; gap: 8px; padding-left: 5px; }
.user-caret { margin-left: auto; margin-right: 9px; }
.status .wide { width: 57px; }
.status .nav { width: 72px; padding-left: 7px; gap: 8px; fill: #555; }
.status .views { width: 69px; padding-left: 7px; gap: 11px; }
.status svg { display: block; }

/* taskbar */
.taskbar { display: grid; grid-template-columns: 1fr auto 1fr; align-items: center; height: 60px; border-top: 1px solid #3b4653; background: linear-gradient(90deg, #1e2c37 0, #222b34 15%, #162947 19%, #12234c 28%, #12234c 48%, #14234c 65%, #12254f 70%, #1f2a38 81%, #1d2b36 100%); color: #fff; }
.apps { display: flex; grid-column: 2; align-items: center; gap: 7px; }
.apps button { display: flex; position: relative; align-items: center; justify-content: center; width: 48px; height: 50px; border-radius: 5px; }
.apps .focused { background: #24315a; border: 1px solid #2e3b62; }
.run::after, .focused::after { content: ""; position: absolute; bottom: 1px; width: 8px; height: 4px; border-radius: 2px; background: #8d93a6; }
.focused::after { width: 20px; bottom: 0; background: #4cc2ff; }
.search { display: flex; align-items: center; width: 275px; height: 40px; padding: 0 10px 0 15px; border: 1px solid #4b5875; border-radius: 20px; background: #35415f; }
.search input { flex: 1; min-width: 0; margin-left: 10px; padding: 0; border: 0; background: none; font: inherit; font-size: 17px; }
.search input::placeholder { color: #d5d9e2; opacity: 1; }
.tray { display: flex; align-items: center; justify-content: flex-end; padding-right: 19px; }
.tray svg { margin-right: 10px; }
.tray svg:nth-child(-n+3) { margin-right: 21px; }
.clock { display: flex; flex-direction: column; align-items: flex-end; width: 86px; font-size: 15px; line-height: 20px; white-space: nowrap; }
```
